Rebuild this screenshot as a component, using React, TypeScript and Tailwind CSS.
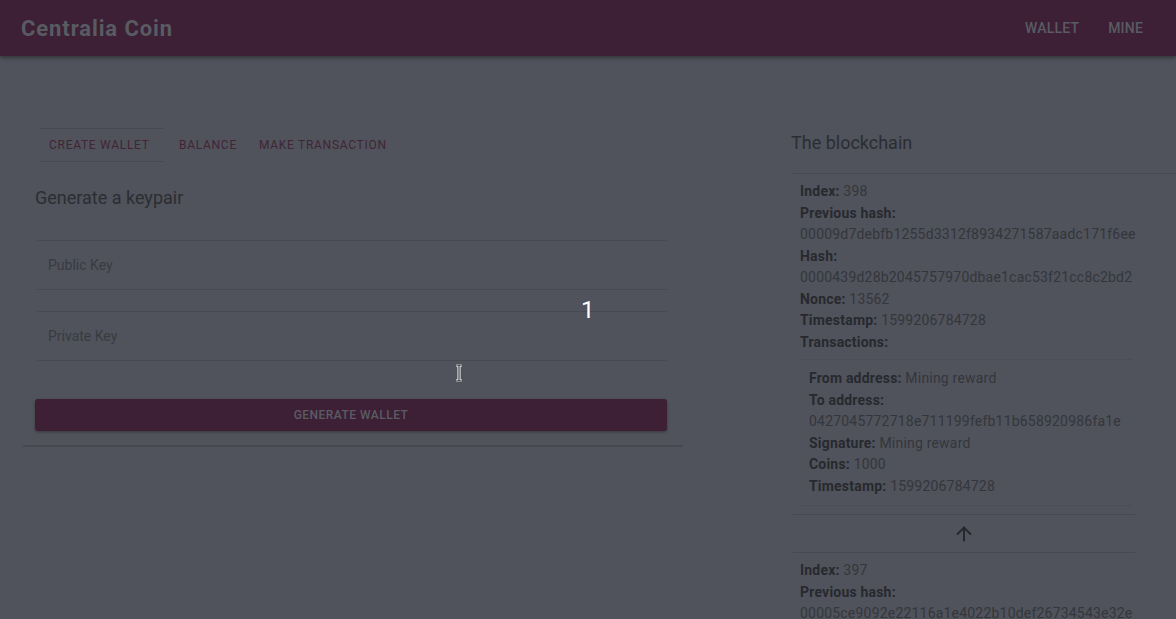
import { ArrowUp } from 'lucide-react';

const block398 = {
  index: 398,
  prev: '00009d7debfb1255d3312f8934271587aadc171f6ee',
  hash: '0000439d28b2045757970dbae1cac53f21cc8c2bd2',
  nonce: 13562,
  timestamp: 1599206784728,
};

function Field({ label }: { label: string }) {
  return (
    <div className="border-y border-[#474951] h-[50px] flex items-center px-[11px] text-[14px] text-[#393b42]">
      {label}
    </div>
  );
}

function Row({ label, value, block }: { label: string; value?: string | number; block?: boolean }) {
  return (
    <div className="leading-[21.5px] whitespace-nowrap tracking-[0.2px]">
      <span className="font-bold text-[#27292f]">{label}</span>
      {block ? <div className="text-[#34363c]">{value}</div> : value !== undefined && <span className="text-[#34363c]"> {value}</span>}
    </div>
  );
}

export default function App() {
  return (
    <div className="min-h-[619px] bg-[#50535b] overflow-hidden relative" style={{ fontFamily: 'Roboto, "Liberation Sans", sans-serif' }}>
      {/* Header */}
      <header className="h-[56px] bg-[#3d2035] flex items-center justify-between pl-[21px] pr-[33px] shadow-[0_2px_4px_rgba(0,0,0,0.35)] relative z-10">
        <h1 className="text-[22px] font-bold text-[#595b63] tracking-[0.9px]">Centralia Coin</h1>
        <nav className="flex gap-[29px] text-[14px] font-medium text-[#595b63] tracking-[0.2px]">
          <span>WALLET</span>
          <span>MINE</span>
        </nav>
      </header>

      <div className="flex items-start pt-[72px]">
        {/* Left card */}
        <section className="ml-[23px] w-[660px] border-b-2 border-[#474950] pb-[14px]">
          <div className="flex items-center pl-[17px] text-[12px] tracking-[0.06em] text-[#412536] h-[34px]">
            <div className="h-full w-[124px] border-y border-[#474951] flex items-center pl-[9px]">CREATE WALLET</div>
            <div className="ml-[15px]">BALANCE</div>
            <div className="ml-[22px]">MAKE TRANSACTION</div>
          </div>
          <div className="px-[12px] pr-[16px]">
            <h2 className="text-[18px] text-[#2b2d33] mt-[25px] h-[22px] leading-[22px]">Generate a keypair</h2>
            <div className="mt-[31px] pl-[2px] space-y-[21px]">
              <Field label="Public Key" />
              <Field label="Private Key" />
            </div>
            <button className="mt-[38px] w-full h-[32px] bg-[#3d2035] rounded-[3px] shadow-[0_1px_3px_rgba(0,0,0,0.35)] text-[12px] font-medium tracking-[0.04em] text-[#5a5c64]">
              GENERATE WALLET
            </button>
          </div>
        </section>

        {/* Right column */}
        <section className="ml-[108px] flex-1 min-w-0">
          <h2 className="text-[18px] text-[#2b2d33] h-[22px] leading-[22px] mt-[4px]">The blockchain</h2>
          <div className="mt-[19px] ml-[2px] border-t border-[#474951] pt-[7px]">
            <div className="w-[345px] overflow-hidden pl-[7px] text-[14px]">
              <Row label="Index:" value={block398.index} />
              <Row label="Previous hash:" value={block398.prev} block />
              <Row label="Hash:" value={block398.hash} block />
              <Row label="Nonce:" value={block398.nonce} />
              <Row label="Timestamp:" value={block398.timestamp} />
              <Row label="Transactions:" />
              <div className="mt-[6px] mr-[7px] border-t border-[#474951] pt-[8px] pl-[9px] pb-[8px] border-b border-dotted">
                <Row label="From address:" value="Mining reward" />
                <Row label="To address:" value="0427045772718e711199fefb11b658920986fa1e" block />
                <Row label="Signature:" value="Mining reward" />
                <Row label="Coins:" value={1000} />
                <Row label="Timestamp:" value={block398.timestamp} />
              </div>
            </div>
            <div className="w-[342px] border-y border-[#474951] mt-[8px] h-[39px] flex items-center justify-center">
              <ArrowUp size={22} strokeWidth={2.1} className="text-[#25272d]" />
            </div>
            <div className="w-[345px] overflow-hidden pl-[7px] pt-[7px] text-[14px]">
              <Row label="Index:" value={397} />
              <Row label="Previous hash:" value="00005ce9092e22116a1e4022b10def26734543e32e" block />
            </div>
          </div>
        </section>
      </div>

      {/* Overlay step number and cursor */}
      <div className="absolute left-[581px] top-[298px] text-[24px] text-white leading-none">1</div>
      <svg className="absolute left-[455px] top-[364px]" width="8" height="18" viewBox="0 0 8 18">
        <path d="M1 1h6M1 17h6M4 1v16" stroke="#ffffff" strokeWidth="3" fill="none" />
        <path d="M1 1h6M1 17h6M4 1v16" stroke="#111111" strokeWidth="1" fill="none" />
      </svg>
    </div>
  );
}
